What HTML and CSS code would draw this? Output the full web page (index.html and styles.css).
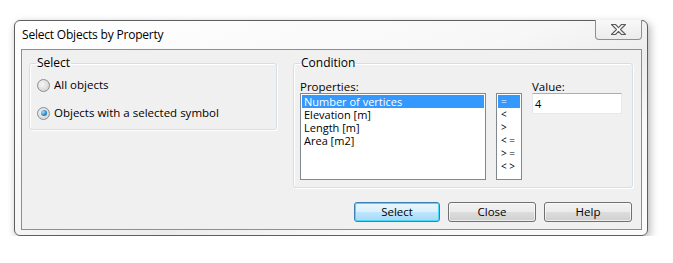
FILE: index.html
```html
<!DOCTYPE html>
<html lang="en">

<head>
  <meta charset="UTF-8">
  <link rel="stylesheet" href="styles.css">
</head>

<body>
  <div class="window">
    <div class="titlebar">
      <span class="title">Select Objects by Property</span>
      <button class="close-btn" type="button" aria-label="Close">
        <svg width="17" height="13" viewBox="0 0 17 13">
          <path d="M1.5 1.5h4l3 3.2 3-3.2h4l-5 5 5 5h-4l-3-3.2-3 3.2h-4l5-5z" fill="#fcfcfc" stroke="#5c5c5c" stroke-width="1.1" stroke-linejoin="round"/>
        </svg>
      </button>
    </div>

    <div class="client">
      <div class="groups">
        <fieldset class="group group-select">
          <legend>Select</legend>
          <label class="radio-row">
            <span class="radio"></span>
            All objects
          </label>
          <label class="radio-row">
            <span class="radio checked"></span>
            Objects with a selected symbol
          </label>
        </fieldset>

        <fieldset class="group group-condition">
          <legend>Condition</legend>
          <div class="col">
            <span class="field-label">Properties:</span>
            <ul class="listbox props">
              <li class="selected">Number of vertices</li>
              <li>Elevation [m]</li>
              <li>Length [m]</li>
              <li>Area [m2]</li>
            </ul>
          </div>
          <div class="col">
            <span class="field-label">&nbsp;</span>
            <ul class="listbox ops">
              <li class="selected">=</li>
              <li>&lt;</li>
              <li>&gt;</li>
              <li>&lt; =</li>
              <li>&gt; =</li>
              <li>&lt; &gt;</li>
            </ul>
          </div>
          <div class="col">
            <span class="field-label">Value:</span>
            <div class="textbox">4</div>
          </div>
        </fieldset>
      </div>

      <!-- Buttons -->
      <div class="button-row">
        <button type="button" class="btn default">Select</button>
        <button type="button" class="btn">Close</button>
        <button type="button" class="btn">Help</button>
      </div>
    </div>
  </div>
</body>

</html>
```

FILE: styles.css
```css
body, html {
  margin: 0;
  padding: 0;
  background: #ffffff;
  font-family: "Open Sans", "Noto Sans", sans-serif;
  font-size: 11px;
  color: #000000;
}

.window {
  margin: 20px 0 0 14px;
  width: 634px;
  height: 216px;
  box-sizing: border-box;
  border: 1px solid #5e5e5e;
  border-radius: 6px;
  background: linear-gradient(160deg, #ffffff 0%, #f7f7f7 45%, #ececec 60%, #f8f8f8 75%, #fbfbfb 100%);
  box-shadow: 2px 3px 8px rgba(0, 0, 0, 0.3);
  padding: 0 5px 5px 6px;
  display: flex;
  flex-direction: column;
}

.titlebar {
  height: 28px;
  display: flex;
  justify-content: space-between;
  align-items: flex-start;
}

.title {
  margin: 7px 0 0 1px;
  font-size: 12px;
  line-height: 14px;
  letter-spacing: -0.2px;
}

.close-btn {
  margin-top: -1px;
  width: 47px;
  height: 20px;
  padding: 0;
  border: 1px solid #8f8f8f;
  border-top: none;
  border-radius: 0 0 4px 4px;
  background: linear-gradient(#f8f8f8, #ececec);
  display: flex;
  align-items: center;
  justify-content: center;
}

.client {
  flex: 1;
  border: 1px solid #8e8e8e;
  background: #f0f0f0;
  padding: 6px 8px 7px 7px;
  display: flex;
  flex-direction: column;
}

.groups {
  display: flex;
  align-items: flex-start;
  gap: 16px;
}

.group {
  margin: 0;
  border: 1px solid #d5dfe5;
  border-radius: 3px;
  box-shadow: inset 1px 1px 0 #ffffff, 1px 1px 0 #ffffff;
}

.group legend {
  padding: 0 1px;
  font-size: 12px;
  line-height: 14px;
}

.group-select {
  width: 249px;
  box-sizing: border-box;
  padding: 7px 7px 8px 7px;
  display: flex;
  flex-direction: column;
  gap: 12px;
}

.group-select legend {
  margin-left: -1px;
}

.radio-row {
  display: flex;
  align-items: center;
  gap: 4px;
  height: 16px;
  line-height: 16px;
  font-size: 11.5px;
}

.radio {
  width: 11px;
  height: 11px;
  border-radius: 50%;
  border: 1px solid #8b8d91;
  background: radial-gradient(circle at 40% 40%, #f6f6f6 0%, #dcdcdc 60%, #c8c8c8 100%);
  display: flex;
  align-items: center;
  justify-content: center;
}

.radio.checked::after {
  content: "";
  width: 6px;
  height: 6px;
  border-radius: 50%;
  background: radial-gradient(circle at 35% 35%, #9fe3ff 0%, #2b8ad0 55%, #12507e 100%);
}

.group-condition {
  width: 340px;
  box-sizing: border-box;
  padding: 10px 10px 7px 6px;
  display: flex;
  gap: 10px;
}

.col {
  display: flex;
  flex-direction: column;
}

.field-label {
  line-height: 13px;
  height: 13px;
  font-size: 11.5px;
}

.listbox {
  margin: 0;
  padding: 1px;
  list-style: none;
  background: #ffffff;
  border: 1px solid #828790;
  height: 83px;
  box-sizing: content-box;
  line-height: 13px;
}

.listbox li {
  padding-left: 2px;
  white-space: nowrap;
}

.listbox li.selected {
  background: #3399ff;
  color: #ffffff;
}

.props {
  width: 182px;
}

.ops {
  width: 22px;
  font-size: 10px;
}

.ops li {
  padding-left: 3px;
}

.textbox {
  width: 86px;
  height: 19px;
  border: 1px solid #e3e9ef;
  border-top-color: #abadb3;
  background: #ffffff;
  padding-left: 2px;
  line-height: 19px;
}

.button-row {
  margin-top: auto;
  display: flex;
  justify-content: flex-end;
  gap: 8px;
  padding-right: 1px;
}

.btn {
  height: 20px;
  width: 88px;
  padding: 0;
  font-family: inherit;
  font-size: 11.5px;
  line-height: 16px;
  color: #000000;
  border: 1px solid #707070;
  border-radius: 3px;
  background: linear-gradient(#f2f2f2 0%, #ebebeb 50%, #dddddd 51%, #cfcfcf 100%);
  box-shadow: inset 0 0 0 1px rgba(255, 255, 255, 0.6);
}

.btn.default {
  width: 86px;
  border-color: #3c7fb1;
  background: linear-gradient(#eaf6fd 0%, #d9f0fc 50%, #bee6fd 51%, #a7d9f5 100%);
  box-shadow: inset 0 0 0 1px #48d9fd;
}
```
